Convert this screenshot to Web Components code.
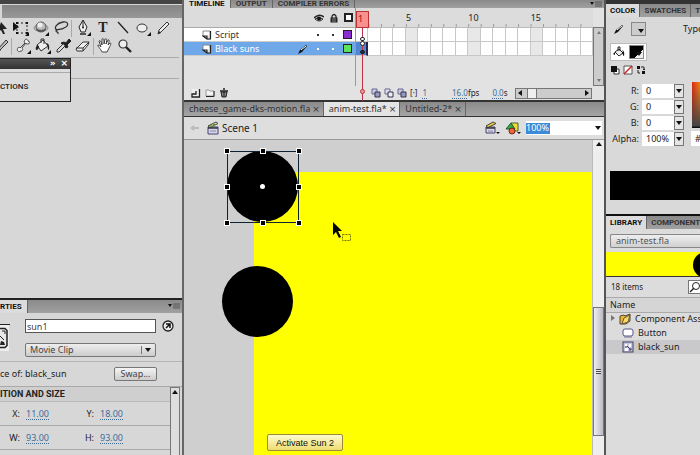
<!DOCTYPE html>
<html lang="en">
<head>
<meta charset="utf-8">
<title>anim-test.fla</title>
<style>
html,body{margin:0;height:100%}
body{font-family:"Noto Sans","Open Sans",sans-serif;font-size:9px;line-height:12px;color:#222;background:#d7d7d7;overflow:hidden}
</style>
</head>
<body>
<flash-workspace></flash-workspace>
<script>
const base = `
*{box-sizing:border-box}
button,input,select{font:inherit;color:inherit;margin:0;padding:0;border:0;background:none;border-radius:0;min-width:0}
button{display:inline-flex;align-items:center;justify-content:center}
a{color:#3c6d9c;text-decoration:underline dotted;text-underline-offset:2px}
`;
const define = (name, css, html) => customElements.define(name, class extends HTMLElement {
  constructor() {
    super();
    const t = document.createElement('template');
    t.innerHTML = `<style>${base}${css}</style>${html}`;
    this.attachShadow({mode: 'open'}).append(t.content.cloneNode(true));
  }
});

const corner = '<path d="M17 17v-4l-4 4z" fill="#111"/>';
const icons = {
  arrow: ['0 0 18 18', '<path d="M8 3l6 7-4 0 2 5-2 0-2-4-3 2z" fill="#222"/>'],
  transform: ['0 0 18 18', '<rect x="5" y="4" width="10" height="10" fill="none" stroke="#222" stroke-dasharray="2 2"/><path d="M1 3v9l6-4z" fill="#111"/><path d="M4 3h2v2H4zM14 3h2v2h-2zM14 13h2v2h-2zM4 13h2v2H4z" fill="#111"/>' + corner],
  sphere: ['0 0 18 18', '<ellipse cx="9" cy="9" rx="7" ry="3.500" fill="none" stroke="#888"/><circle cx="9" cy="8" r="5" fill="#bbb" stroke="#555"/><circle cx="8" cy="6" r="2.500" fill="#eee"/><path d="M4 9q5 4 10 0-1 4-5 4T4 9" fill="#555"/>' + corner],
  lasso: ['0 0 18 18', '<path d="M5 11C1 9 5 4 11 3c6-1 6 4 1 6-3 2-8 1-8 3 0 1 3 1 2 3" fill="none" stroke="#333" stroke-width="1.3"/>'],
  pen: ['0 0 18 18', '<path d="M9 1l4 7-2 5H7L5 8z" fill="#eee" stroke="#222"/><path d="M9 2v6" stroke="#222"/><circle cx="9" cy="8.500" r="1" fill="#222"/><path d="M6 14h6v2H6z" fill="#555"/>' + corner],
  line: ['0 0 18 18', '<path d="M4 3l10 11" stroke="#222" stroke-width="1.3"/>'],
  oval: ['0 0 18 18', '<ellipse cx="8" cy="9" rx="5" ry="4" fill="#eee" stroke="#333"/>' + corner],
  pencil: ['0 0 18 18', '<path d="M4 15l1-4 8-8 2 2-8 8z" fill="#eee" stroke="#333"/><path d="M4 15l1-3 2 2z" fill="#222"/>'],
  brush: ['0 0 18 18', '<path d="M5 15l1-4 7-8 2 2-8 8z" fill="#bbb" stroke="#333"/><path d="M2 14q3-4 6 0z" fill="#333"/>'],
  bone: ['0 0 18 18', '<path d="M11 3c1-2 3 0 3 1 2 0 2 3 0 3-1 0-2 0-2-1l-4 5c2 2-1 4-2 3-1 2-4-1-2-3 0-1 2-1 2 0l5-5c-1-1-1-2 0-3z" fill="#eee" stroke="#444"/>' + corner],
  bucket: ['0 0 18 18', '<path d="M3 8l6-5 5 6-7 5z" fill="#eee" stroke="#333"/><path d="M7 6V2h3v5" fill="none" stroke="#333"/><path d="M3 8q-2 3-1 5 3 0 3-4zM12 6q4 0 3 7-2-1-1-4z" fill="#222"/>' + corner],
  dropper: ['0 0 18 18', '<path d="M10 5l2 1 3-4 2 2-4 4 1 2-2 1-5-5z" fill="#222" stroke="#222"/><path d="M9 7l-6 6v2h2l6-6" fill="#ddd" stroke="#333"/>'],
  eraser: ['0 0 18 18', '<path d="M2 12l7-7h6l-1 3-5 6H3z" fill="#eee" stroke="#333"/><path d="M2 11h7l6-6M9 11v3" fill="none" stroke="#333"/>'],
  hand: ['0 0 18 18', '<path d="M6 15C5 12 1 9 2 8c1 0 2 1 3 2L3 4c1-1 2 0 3 4V2c1-1 2-1 2 5l1-5c2-1 2 1 1 5l2-4c2-1 1 2 0 5l2-2c2 0 0 3-1 5l-2 4z" fill="#fff" stroke="#333" stroke-width=".9"/>'],
  zoom: ['0 0 18 18', '<circle cx="7" cy="7" r="4" fill="#eee" stroke="#333" stroke-width="1.2"/><path d="M10 10l5 5" stroke="#222" stroke-width="2.4"/>'],
  menu: ['0 0 12 8', '<path d="M0 2h4L2 5z" fill="#111"/><path d="M5 2h7M5 4h7M5 6h7" stroke="#555"/>'],
  eye: ['0 0 10 10', '<path d="M0 5q5-5 10-1" fill="none" stroke="#222" stroke-width="1.5"/><path d="M1 6q4-3 8 0-4 4-8 0" fill="#ddd" stroke="#333"/><circle cx="5" cy="5.5" r="2" fill="#111"/>'],
  lock: ['0 0 10 10', '<path d="M3 5V3q2-3 4 0v2" fill="none" stroke="#222" stroke-width="1.3"/><rect x="1.5" y="4.5" width="7" height="5" fill="#222"/><path d="M3 6h4M3 8h4" stroke="#888"/>'],
  layer: ['0 0 10 10', '<path d="M1 1h7v8H5L1 6z" fill="#fff" stroke="#888"/><path d="M8.500 1v8H5V6H1l4 3" fill="#ddd" stroke="#222" stroke-width="1.200"/>'],
  newlayer: ['0 0 10 10', '<path d="M1 1h7v8H1z" fill="#eee"/><path d="M8.500 1v8H1V6h4V3" fill="none" stroke="#222" stroke-width="1.300"/>'],
  folder: ['0 0 10 10', '<path d="M1 2h3l1 1h4v5H1z" fill="#f3f3f3" stroke="#999"/><path d="M9 3v5.500H1" fill="none" stroke="#222"/>'],
  trash: ['0 0 10 10', '<path d="M1 3h8M4 1h2" stroke="#222" stroke-width="1.5"/><path d="M2 4h6L7 9H3z" fill="#888" stroke="#222"/><path d="M5 4v5" stroke="#222"/>'],
  edit: ['0 0 10 10', '<path d="M0 10l2-4 6-5 1 1-5 6z" fill="#111"/><path d="M3 6l5-4" stroke="#fff"/>'],
  onion: ['0 0 10 10', '<path d="M1 1h5v5H1z" fill="#ccd" stroke="#669"/><path d="M4 4h5v5H4z" fill="#99b" stroke="#335"/>'],
  onion2: ['0 0 10 10', '<path d="M1 1h5v5H1z" fill="none" stroke="#669"/><path d="M4 4h5v5H4z" fill="#eee" stroke="#335"/>'],
  back: ['0 0 12 10', '<path d="M1 5l4-3v2h5v2H5v2z" fill="#bbb"/>'],
  clap: ['0 0 14 14', '<path d="M2 6h10v7H2z" fill="#d8d5f0" stroke="#446"/><path d="M2 5l8-4 2 1.500-8 4z" fill="#ddb" stroke="#443"/><path d="M2 7h10" stroke="#334" stroke-width="1.500"/><path d="M4 10h6" stroke="#889"/><path d="M4 4.500l2 1M7 3l2 1" stroke="#693" stroke-width="1.500"/>'],
  clapgold: ['0 0 16 14', '<path d="M2 6h9v6H2z" fill="#d8d5f0" stroke="#446"/><path d="M2 5l7-4 3 1.500-8 4z" fill="#ec5" stroke="#443"/><path d="M2 7h9" stroke="#334" stroke-width="1.500"/><path d="M4 10h5" stroke="#889"/><path d="M12 11h4l-2 2z" fill="#111"/>'],
  symbols: ['0 0 16 14', '<path d="M6 2h7v8H6z" fill="#ed3" stroke="#463"/><path d="M1 8l5-6 4 6z" fill="#3a4" stroke="#253"/><circle cx="7" cy="10" r="3" fill="#e63" stroke="#722"/><path d="M12 11h4l-2 2z" fill="#111"/>'],
  down: ['0 0 8 8', '<path d="M1 2h6L4 6z" fill="#111"/>'],
  up: ['0 0 8 8', '<path d="M1 6h6L4 2z" fill="#111"/>'],
  upgray: ['0 0 8 8', '<path d="M2 6h4L4 3z" fill="#777"/>'],
  downgray: ['0 0 8 8', '<path d="M2 2h4L4 5z" fill="#777"/>'],
  left: ['0 0 8 8', '<path d="M6 1v6L2 4z" fill="#111"/>'],
  right: ['0 0 8 8', '<path d="M2 1v6l4-3z" fill="#111"/>'],
  clip: ['0 0 12 12', '<rect x="1" y="1" width="10" height="10" fill="#c6c6dc" stroke="#446"/><path d="M3 3h2v2H3zM7 3h2v3H7zM3 7h3v3H3z" fill="#fff"/><path d="M5 5l4 4M9 7v2H7M3 6h2" stroke="#446" fill="none"/>'],
  clipbig: ['0 0 10 28', '<path d="M0 .5h10" stroke="#222"/><path d="M0 1h9v26H0z" fill="#eee"/><path d="M0 4.5h5l2 2v15l-2 2H0" fill="#e8e8e8" stroke="#222" stroke-width="1.5"/><path d="M2 7h3v3" fill="none" stroke="#222"/><path d="M0 12l4 4" stroke="#222"/><path d="M0 21l1-4 3 1 1 3z" fill="#222"/>'],
  go: ['0 0 12 12', '<circle cx="6" cy="6" r="5" fill="#eee" stroke="#222" stroke-width="1.3"/><path d="M4 8l4-4M4 4h4v4" fill="none" stroke="#111" stroke-width="1.5"/>'],
  yfolder: ['0 0 12 12', '<path d="M1 3l4-1 1 1 5-2v7l-4 3H1z" fill="#e9b62c" stroke="#543"/><path d="M3 11l2-6 6-3-2 7z" fill="#fbdc61" stroke="#654"/>'],
  btn: ['0 0 12 10', '<rect x="1" y="1" width="10" height="7" rx="2" fill="#fff" stroke="#558"/><path d="M2 9h8" stroke="#779"/>'],
  search: ['0 0 12 12', '<circle cx="7" cy="5" r="3.5" fill="#fff" stroke="#222"/><path d="M5 7l-4 4" stroke="#222" stroke-width="1.5"/>'],
  bkt: ['0 0 12 12', '<path d="M2 6l4-3 4 4-4 3z" fill="#eee" stroke="#222"/><path d="M5 5V1h2v4" fill="none" stroke="#222"/><path d="M9 4q3 1 2 6-2-1-1-4zM2 6L0 8l2 1z" fill="#111"/>'],
  bw: ['0 0 10 10', '<path d="M4 4h5v5H4z" fill="#fff" stroke="#333"/><path d="M1 1h6v6H1z" fill="#111"/>'],
  none: ['0 0 10 10', '<path d="M1 1h8v8H1z" fill="#fff" stroke="#555"/><path d="M1 9l8-8" stroke="#c22" stroke-width="1.4"/>'],
  swap: ['0 0 10 10', '<path d="M1 1h3v3H1zM6 6h3v3H6z" fill="#111"/><path d="M5 2h3v3M7 4l1 1 1-1M4 8H2V5" fill="none" stroke="#222"/>'],
  cursor: ['0 0 20 22', '<path d="M1 1v13l3-3 3 6 2-1-3-6h4z" fill="#000"/><path d="M10.5 13.5h8v6h-8z" fill="none" stroke="#770" stroke-dasharray="2 1"/>']
};
customElements.define('fl-icon', class extends HTMLElement {
  connectedCallback() {
    if (this.shadowRoot) return;
    const [box, body] = icons[this.getAttribute('name')];
    const [, , w, h] = box.split(' ');
    this.attachShadow({mode: 'open'}).innerHTML = `<style>:host{display:inline-block;flex:none;width:${w}px;height:${h}px}svg{display:block}</style><svg aria-hidden="true" width="${w}" height="${h}" viewBox="${box}">${body}</svg>`;
  }
});
const icon = n => `<fl-icon name="${n}"></fl-icon>`;
const tool = n => `<button aria-label="${n}">${icon(n)}</button>`;

define('panel-tabs', `
:host{display:flex;align-items:stretch;height:13px;background:linear-gradient(#8a8a8a,#a0a0a0);font:700 8px/12px Roboto,sans-serif;white-space:nowrap}
.menu{display:flex;margin-left:auto;padding:var(--menu-top,2px) 2px 0 0}
:host([nomenu]) .menu{display:none}`, `<slot></slot><span class="menu">${icon('menu')}</span>`);
define('panel-tab', `
:host{display:flex;flex:none;border-right:1px solid #666}
button{padding:0 var(--tab-pad,5px);font-weight:700;color:#333;align-items:var(--tab-align,center);line-height:var(--tab-line,12px)}
:host([active]) button{background:#dcdcdc;color:#111}
:host([flush]) button{padding-left:0}`, `<button role="tab"><slot></slot></button>`);

define('tool-box', `
:host{display:block;position:relative;border-top:4px solid #444;background:#d7d7d7}
.grip{height:13px;margin:1px 0 0 2px;background:linear-gradient(#858585,#989898)}
.tools{padding:1px 0 2px}
.row{display:flex;height:18px;align-items:center}
.row button{width:20px;height:18px}
.row .cut{width:11px;overflow:hidden;justify-content:flex-end}
i{width:1px;height:17px;background:#aaa;margin:0 1px 0 0}
.t{font:bold 14px/18px "Liberation Serif",serif}
.opts{height:22px;border:solid #aaa;border-width:1px 0;margin-right:3px}
.float{position:absolute;left:0;top:54px;width:71px;height:44px;border:1px solid #222;border-left:0;background:#dcdcdc}
.bar{height:10px;background:linear-gradient(#555,#333);color:#fff;display:flex;justify-content:flex-end;gap:5px;padding-right:2px;font:bold 9px/9px "DejaVu Sans",sans-serif}
.bar button{height:9px}
.name{border-top:1px solid #aaa;margin-top:3px;padding-top:8px;font:500 8px/12px Roboto,sans-serif}`, `
<div class="grip"></div>
<div class="tools">
<div class="row"><button class="cut" aria-label="selection">${icon('arrow')}</button>${['transform','sphere','lasso'].map(tool).join('')}<i></i>${tool('pen')}<button class="t">T</button>${['line','oval','pencil'].map(tool).join('')}</div>
<div class="row"><button class="cut" aria-label="brush">${icon('brush')}</button><i></i>${['bone','bucket','dropper','eraser'].map(tool).join('')}<i></i>${tool('hand')}${tool('zoom')}</div>
</div>
<div class="opts"></div>
<div class="float"><div class="bar"><button>»</button><button>×</button></div><div class="name">CTIONS</div></div>`);

define('scroll-v', `
:host{display:flex;flex-direction:column;justify-content:space-between;align-items:center;background:#ccc;border:1px solid #777}
`, `<slot></slot><slot name="end"></slot>`);

define('properties-panel', `
:host{display:block;border-top:2px solid #222;background:#d7d7d7}
.id{display:grid;grid-template-columns:10px 1fr 12px;column-gap:6px;padding:6px 8px 4px 0;border-bottom:1px solid #b5b5b5;align-items:center}
.fields{display:grid;gap:10px;padding-left:9px}
.id>button{align-self:start;height:14px}
input{width:100%;height:14px;border:1px solid #555;background:#fff;padding:0 1px;color:#444}
.sel{display:flex;position:relative;height:14px;border:1px solid #777;border-radius:2px;background:linear-gradient(#eee,#ccc)}
select{appearance:none;width:100%;padding-left:4px;color:#444}
.sel fl-icon{position:absolute;right:3px;top:2px;border-left:1px solid #777;padding-left:2px;width:11px}
.of{display:flex;align-items:center;height:25px;padding-right:25px;border-bottom:1px solid #aaa}
.of b{font-weight:400;width:25px;white-space:nowrap}
.of button{margin-left:auto;width:43px;height:14px;border:1px solid #777;border-radius:2px;background:linear-gradient(#f4f4f4,#ccc);color:#444}
.body{display:flex;height:68px}
.grid{flex:1}
h2{margin:0;font:700 9px/14px Roboto,sans-serif;background:#cfcfcf;border-bottom:1px solid #bbb}
.r{display:grid;grid-template-columns:20px 50px 12px 1fr;column-gap:6px;height:24px;align-items:center;border-bottom:1px solid #aaa}
.r span{text-align:right}
scroll-v{width:10px;margin-right:2px;background:#dedede;border-bottom:0}`, `
<panel-tabs><panel-tab active flush>RTIES</panel-tab></panel-tabs>
<div class="id">${icon('clipbig')}<div class="fields"><input aria-label="Instance name" value="sun1"><label class="sel"><select aria-label="Instance type"><option>Movie Clip</option></select>${icon('down')}</label></div><button aria-label="Help">${icon('go')}</button></div>
<div class="of"><b>ce of:</b><span>black_sun</span><button>Swap...</button></div>
<div class="body"><div class="grid"><h2>ITION AND SIZE</h2>
<div class="r"><span>X:</span><a href="#x">11.00</a><span>Y:</span><a href="#y">18.00</a></div>
<div class="r"><span>W:</span><a href="#w">93.00</a><span>H:</span><a href="#h">93.00</a></div></div><scroll-v>${icon('up')}</scroll-v></div>`);

define('layer-row', `
:host{display:grid;grid-template-columns:12px 1fr 14px 15px 15px 14px;height:14px;align-items:center;justify-items:center;padding:0 1px 0 17px;background:#fff;border-bottom:1px solid #ccc;color:#333}
:host([selected]){background:#6fa8e8;color:#fff}
.n{justify-self:start;padding-left:2px}
.d{width:2px;height:2px;background:currentColor}
.c{width:9px;height:9px;border:1px solid #222;background:var(--swatch)}
.e{visibility:hidden;height:10px;display:flex}:host([selected]) .e{visibility:visible}`,
`${icon('layer')}<span class="n"><slot></slot></span><span class="e">${icon('edit')}</span><i class="d"></i><i class="d"></i><i class="c"></i>`);

const cells = Array.from({length: 19}, (_, i) => `<i class="${(i + 1) % 5 ? '' : 'five'}"></i>`).join('');
define('time-line', `
:host{display:block;background:#e2e2e2;border-bottom:2px solid #333}
panel-tabs{height:8px;--tab-align:flex-start;--tab-line:8px;--menu-top:0px}
.main{display:grid;grid-template-columns:171px 1fr 11px;height:78px}
.head{height:20px;display:flex;justify-content:flex-end;align-items:center;gap:5px;padding-right:2px;border-bottom:1px solid #aaa;background:#dcdcdc}
.box{width:9px;height:9px;border:2px solid #222;background:#fff}
.frames{position:relative;border-left:1px solid #999}
.nums,.cells{display:grid;grid-template-columns:repeat(19,1fr)}
.nums{height:20px;align-items:center;background:linear-gradient(90deg,#999 1px,transparent 1px) 0 100%/calc(100%/19) 3px repeat-x #dcdcdc;border-bottom:1px solid #bbb}
.nums span{width:0}
.cells i{height:14px;background:#fff;border:solid #c8c8c8;border-width:0 1px 1px 0}
.cells i.five{background:#e8e8e8}
.cells.s i:first-child{background:#4f86d0;border-right:2px solid #225}
.play{position:absolute;left:0;top:3px;width:13px;height:17px;border:1px solid #b33;background:#f89090;color:#811;padding-left:1px;line-height:14px}
.play::after{content:"";position:absolute;left:5px;top:16px;width:1px;height:73px;background:#c0304a}
.key{position:absolute;left:4px;top:33px;width:5px;height:5px;border:1px solid #222;border-radius:3px;background:#fff}
.key.k0{top:29px;height:4px}
.key.k2{top:42px;height:4px;background:#224}
.key.k3{top:81px;border-color:#b33;background:#e99}
scroll-v{margin-top:19px}
.foot{display:grid;grid-template-columns:171px 1fr;height:14px;align-items:center;color:#3c6d9c}
.ic,.st{display:flex;gap:4px;align-items:center}
.ic{padding-left:7px}.st{padding:0 12px 0 16px;gap:3px;font-size:8px}
.st .fps{margin-left:22px}.st em{font-style:normal;color:#222}.st .s{margin-left:10px}
.st>*{white-space:nowrap}.st>a{margin-left:2px}
.bar{display:flex;flex:none;width:77px;height:11px;border:1px solid #777;background:#ccc;margin-left:auto;align-items:center}
.bar b{width:10px;height:9px;background:#eee;border:solid #777;border-width:0 1px;margin:0 auto 0 3px}
`, `
<panel-tabs><panel-tab active>TIMELINE</panel-tab><panel-tab>OUTPUT</panel-tab><panel-tab>COMPILER ERRORS</panel-tab></panel-tabs>
<div class="main"><div><div class="head">${icon('eye')}${icon('lock')}<i class="box"></i></div>
<layer-row style="--swatch:#8b2fd0">Script</layer-row><layer-row selected style="--swatch:#5be35b">Black suns</layer-row></div>
<div class="frames"><div class="nums"><span style="grid-column:5">5</span><span style="grid-column:10">10</span><span style="grid-column:15">15</span></div>
<div class="cells">${cells}</div><div class="cells s">${cells}</div><div class="play">1</div><i class="key k0"></i><i class="key"></i><i class="key k2"></i><i class="key k3"></i></div>
<scroll-v>${icon('upgray')}<fl-icon slot="end" name="downgray"></fl-icon></scroll-v></div>
<div class="foot"><div class="ic">${tool('newlayer')}${tool('folder')}${tool('trash')}</div>
<div class="st">${tool('onion')}${tool('onion2')}${tool('onion')}<em>[·]</em><a href="#f">1</a><span class="fps"><a href="#fps">16.0</a><em>fps</em></span><span class="s"><a href="#s">0.0</a><em>s</em></span><div class="bar">${icon('left')}<b></b>${icon('right')}</div></div></div>`);

define('doc-tab', `
:host{display:flex;align-items:center;gap:2px;padding:0 3px 0 5px;border-right:1px solid #666;color:#333;white-space:nowrap}
:host([active]){background:#e4e4e4}
.x{font:9px/12px "DejaVu Sans",sans-serif}`, `<button role="tab"><slot></slot></button><button class="x" aria-label="Close">×</button>`);

define('doc-window', `
:host{display:flex;flex-direction:column;min-height:0;flex:1}
.tabs{display:flex;height:15px;flex:none;background:linear-gradient(#8a8a8a,#a5a5a5);border-bottom:1px solid #333}
.edit{display:flex;align-items:center;height:23px;flex:none;background:#dedede;border-bottom:1px solid #999;padding:0 2px 0 5px;font-size:9px}
.edit>span{margin:0 auto 0 0;font-size:10px}.edit>fl-icon{margin-right:5px}
.edit>fl-icon[name=clap]{margin-right:2px}
.zoom{position:relative;display:flex;width:76px;height:14px;background:#fff;align-items:center}
.zoom input{width:24px;height:11px;background:#3b8bd8;color:#fff}
.zoom fl-icon{margin-left:auto}
.view{flex:1;display:grid;grid-template-columns:1fr 12px;min-height:0}
.canvas{position:relative;overflow:hidden;background:#cfcfcf}
.stage{position:absolute;left:70px;top:32px;right:0;bottom:0;background:#ff0}
.sun{position:absolute;width:71px;height:71px;border-radius:50%;background:#000}
.s1{left:43px;top:11px}.s2{left:38px;top:126px}
.selbox{position:absolute;left:39px;top:7px}
.ptr{position:absolute;left:148px;top:81px}
.act{position:absolute;left:83px;top:294px;width:76px;height:17px;border:1px solid #998a3c;border-radius:2px;background:linear-gradient(#fffbd0,#eedc70);color:#111;font:9px/12px "Liberation Sans",sans-serif}
.sb{display:flex;flex-direction:column;align-items:center;background:#eee;border-left:1px solid #bbb}
.thumb{width:11px;flex:0 0 41%;margin:auto 0 0;border:1px solid #777;background:linear-gradient(90deg,#eee,#bbbbc8);display:flex;align-items:center;justify-content:center}
.thumb i{width:5px;height:5px;background:repeating-linear-gradient(#444 0 1px,#eee 1px 2px)}
.sb u{flex:0 0 19px}`, `
<div class="tabs"><doc-tab>cheese_game-dks-motion.fla</doc-tab><doc-tab active>anim-test.fla*</doc-tab><doc-tab>Untitled-2*</doc-tab></div>
<div class="edit">${icon('back')}${icon('clap')}<span>Scene 1</span>${icon('clapgold')}${icon('symbols')}<label class="zoom"><input aria-label="Zoom" value="100%">${icon('down')}</label></div>
<div class="view"><div class="canvas"><div class="stage"></div><div class="sun s1"></div><div class="sun s2"></div>
<svg class="selbox" width="80" height="80"><path d="M4.5 4.5h71v71h-71z" fill="none" stroke="#123"/><g fill="#000" stroke="#fff">${[[4,4],[40,4],[76,4],[4,40],[76,40],[4,76],[40,76],[76,76]].map(([x, y]) => `<rect x="${x - 2.5}" y="${y - 2.5}" width="5" height="5"/>`).join('')}</g><circle cx="39.5" cy="39.5" r="2.5" fill="#fff"/></svg>
<fl-icon class="ptr" name="cursor"></fl-icon><button class="act">Activate Sun 2</button></div>
<div class="sb">${icon('up')}<div class="thumb"><i></i></div><u></u></div></div>`);

const field = (n, v) => `<label for="${n}">${n}:</label><span class="f"><input id="${n}" value="${v}"><button aria-label="${n} slider">${icon('down')}</button></span>`;
define('color-panel', `
:host{display:block;background:#d9d9d9;border-top:4px solid #333;height:214px;overflow:hidden;--tab-pad:4px}
.body{display:grid;grid-template-columns:84px 1fr;padding-top:2px}
.p{display:flex;align-items:center;gap:4px;margin:0 0 4px 4px;height:20px;width:37px;padding-left:4px}
.p.on{background:#fff;border:1px solid #bbb;height:18px;padding-left:2px}
.sw{width:15px;height:14px;border:1px solid #888;background:#ccc;display:flex;align-items:flex-end;justify-content:flex-end}
.p:not(.on){gap:7px}
.on .sw{background:linear-gradient(135deg,#000 65%,#eee 65%)}
.m{display:flex;gap:3px;padding-left:4px}
.m button{height:10px}
.f4{display:grid;grid-template-columns:33px 1fr;column-gap:3px;row-gap:2px;margin-top:9px;align-items:center;padding-right:6px;text-align:right}
.f{display:flex;height:14px}
.f input{flex:1;background:#fff;padding-left:4px;width:20px}
.f button{width:10px;border:1px solid #777;background:#e4e4e4;overflow:hidden}
.type{padding:4px 0 0;margin-left:-7px}
.ramp{height:46px;margin:47px 0 3px 2px;background:linear-gradient(transparent,#444 95%,#000),linear-gradient(90deg,#e32a10,#f5a21a)}
.hex{width:100%;height:15px;background:#fff;margin-left:1px;padding-left:4px}
.prev{height:29px;background:#000;margin:25px 0 0 4px}`, `
<panel-tabs nomenu><panel-tab active>COLOR</panel-tab><panel-tab>SWATCHES</panel-tab><panel-tab>TR</panel-tab></panel-tabs>
<div class="body"><div><div class="p">${icon('edit')}<button class="sw" aria-label="Stroke color">${icon('down')}</button></div>
<div class="p on">${icon('bkt')}<button class="sw" aria-label="Fill color">${icon('down')}</button></div>
<div class="m">${tool('bw')}${tool('none')}${tool('swap')}</div>
<div class="f4">${field('R', 0)}${field('G', 0)}${field('B', 0)}${field('Alpha', '100%')}</div></div>
<div><div class="type">Type</div><div class="ramp"></div><input class="hex" aria-label="Hex" value="#"></div></div><div class="prev"></div>`);

define('library-panel', `
:host{display:flex;flex-direction:column;flex:1;background:#dcdcdc;border-top:2px solid #111;overflow:hidden;--tab-pad:4px}
panel-tabs{flex:none}
.file{margin:5px 0 4px 4px;height:14px;border:1px solid #888;border-right:0;border-radius:2px 0 0 2px;background:linear-gradient(#eee,#d0d0d0)}
select{appearance:none;width:100%;padding-left:5px;height:12px;color:#555;display:block}
.prev{height:25px;background:#ff0;border-bottom:1px solid #333;overflow:hidden;display:flex;justify-content:flex-end}
.prev i{flex:none;width:26px;height:26px;border-radius:50%;background:#000;margin-right:-19px}
.cnt{display:flex;align-items:center;justify-content:space-between;height:21px;padding-left:5px;font-size:8px;border-bottom:1px solid #aaa}
.q{display:flex;align-items:center;width:12px;height:14px;background:#fff;border:1px solid #777;border-right:0;overflow:hidden}
.q input{width:0}
table{border-collapse:collapse;width:100%;table-layout:fixed}
th{text-align:left;font-weight:400;height:14px;padding:0 4px;border-bottom:1px solid #aaa;background:#d5d5d5}
td{height:14px;padding:0;white-space:nowrap}
td div{display:flex;align-items:center;gap:4px;padding-left:4px}
td span{width:9px;margin-right:-1px}
.sel{background:#c9c9cb}`, `
<panel-tabs nomenu><panel-tab active>LIBRARY</panel-tab><panel-tab>COMPONENT</panel-tab></panel-tabs>
<div class="file"><select aria-label="Document"><option>anim-test.fla</option></select></div>
<div class="prev"><i></i></div>
<div class="cnt">18 items<label class="q">${icon('search')}<input aria-label="Search"></label></div>
<table><thead><tr><th>Name</th></tr></thead><tbody>
<tr><td><div><span><svg width="6" height="8"><path d="M1 1v6l4-3z" fill="#777"/></svg></span>${icon('yfolder')}Component Ass</div></td></tr>
<tr><td><div><span></span>${icon('btn')}Button</div></td></tr>
<tr class="sel"><td><div><span></span>${icon('clip')}black_sun</div></td></tr></tbody></table>`);

define('flash-workspace', `
:host{display:grid;grid-template-columns:184px minmax(0,1fr) 96px;height:100vh;overflow:hidden}
.col{display:flex;flex-direction:column;min-height:0;min-width:0;overflow:hidden}
.l{border-right:2px solid #666}
.l properties-panel{margin-top:auto}
.r{border-left:2px solid #555}`, `
<div class="col l"><tool-box></tool-box><properties-panel></properties-panel></div>
<div class="col"><time-line></time-line><doc-window></doc-window></div>
<div class="col r"><color-panel></color-panel><library-panel></library-panel></div>`);
</script>
</body>
</html>
